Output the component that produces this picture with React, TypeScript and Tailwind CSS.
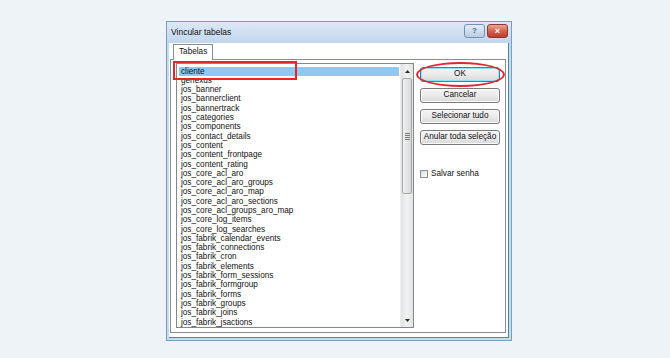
import React from 'react';

const tables = [
  'cliente',
  'genexus',
  'jos_banner',
  'jos_bannerclient',
  'jos_bannertrack',
  'jos_categories',
  'jos_components',
  'jos_contact_details',
  'jos_content',
  'jos_content_frontpage',
  'jos_content_rating',
  'jos_core_acl_aro',
  'jos_core_acl_aro_groups',
  'jos_core_acl_aro_map',
  'jos_core_acl_aro_sections',
  'jos_core_acl_groups_aro_map',
  'jos_core_log_items',
  'jos_core_log_searches',
  'jos_fabrik_calendar_events',
  'jos_fabrik_connections',
  'jos_fabrik_cron',
  'jos_fabrik_elements',
  'jos_fabrik_form_sessions',
  'jos_fabrik_formgroup',
  'jos_fabrik_forms',
  'jos_fabrik_groups',
  'jos_fabrik_joins',
  'jos_fabrik_jsactions',
];

const WinButton = ({ label, primary }: { label: string; primary?: boolean }) => (
  <div
    className={
      'h-[15px] w-[80px] flex items-center justify-center rounded-[3px] border bg-gradient-to-b from-[#f4f4f4] via-[#ebebeb] to-[#d8d8d8] text-[8.2px] text-[#111]' +
      (primary ? ' border-[#3c7fb1] shadow-[inset_0_0_0_1px_#8fe2f4]' : ' border-[#7a7a7a] shadow-[inset_0_0_0_1px_#fbfbfb]')
    }
  >
    {label}
  </div>
);

export default function App() {
  return (
    <div
      className="relative w-[670px] h-[358px] overflow-hidden bg-[#eef3f8] pt-[21px] pl-[166px]"
      style={{ fontFamily: '"Liberation Sans", Arial, sans-serif' }}
    >
      {/* Dialog window */}
      <div className="w-[346px] h-[320px] flex flex-col border border-[#7a9fbd] bg-[#c7daee]">
        {/* Title bar */}
        <div className="h-[21px] flex items-start pl-[4px] pr-[3px] bg-gradient-to-b from-[#dce8f5] to-[#c2d6ec]">
          <span className="mt-[5px] text-[8.5px] leading-[10px] text-[#111]">Vincular tabelas</span>
          <div className="ml-auto mt-[2px] flex gap-[2px]">
            <div className="w-[21px] h-[14px] rounded-[3px] border border-[#7392b2] bg-gradient-to-b from-[#e4eef8] to-[#b8cde3] flex items-center justify-center text-[8px] font-bold text-[#4a6a8c] leading-none">
              ?
            </div>
            <div className="w-[21px] h-[14px] rounded-[3px] border border-[#8a3a30] bg-gradient-to-b from-[#e9a597] via-[#d7604c] to-[#c0392b] flex items-center justify-center text-[9px] font-bold text-white leading-none">
              ×
            </div>
          </div>
        </div>

        {/* Client area */}
        <div className="flex-1 mx-[2px] mb-[2px] bg-white border-b border-r border-[#3e8ea0] flex flex-col pt-[1px] pl-[1px]">
          {/* Tab header */}
          <div className="flex pl-[3px]">
            <div className="relative z-10 -mb-[1px] h-[16px] px-[5px] border border-b-0 border-[#898c95] bg-white flex items-center text-[8.2px] text-[#111]">
              Tabelas
            </div>
          </div>

          {/* Tab panel */}
          <div className="w-[336px] h-[274px] border border-[#898c95] flex pl-[5px] pt-[3px]">
            {/* List box */}
            <div className="w-[238px] h-[265px] border border-[#828790] flex overflow-hidden">
              <div className="flex-1 pt-[3px] pl-[2px] pr-[1px] overflow-hidden">
                {tables.map((t, i) => (
                  <div
                    key={t}
                    className={
                      'h-[9.3px] px-[2px] flex items-center text-[8.2px] leading-none text-[#111] whitespace-nowrap' +
                      (i === 0 ? ' bg-[#8fc8f5]' : '')
                    }
                  >
                    {t}
                  </div>
                ))}
              </div>
              {/* Scrollbar */}
              <div className="w-[13px] flex flex-col bg-gradient-to-r from-[#e3e3e3] via-[#f2f2f2] to-[#e3e3e3] border-l border-[#ececec]">
                <div className="h-[14px] flex items-center justify-center">
                  <svg width="5" height="3" viewBox="0 0 5 3">
                    <path d="M0 3 L2.5 0 L5 3 Z" fill="#2b2b2b" />
                  </svg>
                </div>
                <div className="mx-[1px] h-[116px] rounded-[2px] border border-[#a7a7a7] bg-gradient-to-r from-[#f0f0f0] to-[#d9d9d9] flex items-center justify-center">
                  <div className="flex flex-col gap-[1px]">
                    <div className="w-[5px] h-[1px] bg-[#7a7a7a]" />
                    <div className="w-[5px] h-[1px] bg-[#7a7a7a]" />
                    <div className="w-[5px] h-[1px] bg-[#7a7a7a]" />
                    <div className="w-[5px] h-[1px] bg-[#7a7a7a]" />
                  </div>
                </div>
                <div className="flex-1" />
                <div className="h-[14px] flex items-center justify-center">
                  <svg width="5" height="3" viewBox="0 0 5 3">
                    <path d="M0 0 L5 0 L2.5 3 Z" fill="#2b2b2b" />
                  </svg>
                </div>
              </div>
            </div>

            {/* Buttons column */}
            <div className="ml-[6px] pt-[4px] flex flex-col">
              <div className="flex flex-col gap-[6px]">
                <WinButton label="OK" primary />
                <WinButton label="Cancelar" />
                <WinButton label="Selecionar tudo" />
                <WinButton label="Anular toda seleção" />
              </div>
              <div className="mt-[25px] flex items-center gap-[3px]">
                <div className="w-[8px] h-[8px] border border-[#8e8f8f] bg-gradient-to-br from-[#dcdcdc] to-[#ffffff]" />
                <span className="text-[8.2px] leading-none text-[#111]">Salvar senha</span>
              </div>
            </div>
          </div>
        </div>
      </div>

      {/* Red annotations */}
      <div className="absolute left-[173px] top-[61px] w-[124px] h-[19px] border-2 border-[#e3262c]" />
      <div className="absolute left-[416px] top-[62px] w-[89px] h-[25px] border-2 border-[#e3262c] rounded-[50%]" />
    </div>
  );
}
